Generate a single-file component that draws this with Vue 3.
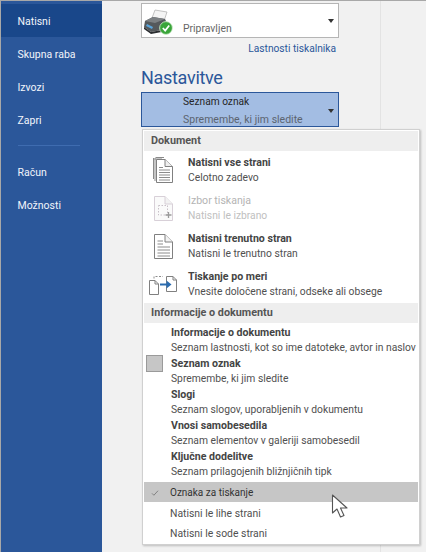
<script setup>
const nav = ['Skupna raba', 'Izvozi', 'Zapri']
const docs = [
  { id: 'all', title: 'Natisni vse strani', sub: 'Celotno zadevo' },
  { id: 'sel', title: 'Izbor tiskanja', sub: 'Natisni le izbrano', off: true },
  { id: 'cur', title: 'Natisni trenutno stran', sub: 'Natisni le trenutno stran' },
  { id: 'cus', title: 'Tiskanje po meri', sub: 'Vnesite določene strani, odseke ali obsege' }
]
const infos = [
  { title: 'Informacije o dokumentu', sub: 'Seznam lastnosti, kot so ime datoteke, avtor in naslov' },
  { title: 'Seznam oznak', sub: 'Spremembe, ki jim sledite', on: true },
  { title: 'Slogi', sub: 'Seznam slogov, uporabljenih v dokumentu' },
  { title: 'Vnosi samobesedila', sub: 'Seznam elementov v galeriji samobesedil' },
  { title: 'Ključne dodelitve', sub: 'Seznam prilagojenih bližnjičnih tipk' }
]
</script>

<template>
  <div class="page">
    <aside class="side">
      <div class="nav active">Natisni</div>
      <div v-for="n in nav" :key="n" class="nav">{{ n }}</div>
      <div class="rule"></div>
      <div class="nav">Račun</div>
      <div class="nav">Možnosti</div>
    </aside>

    <main class="main">
      <div class="col">
        <div class="printer">
          <svg class="pic" width="30" height="26" viewBox="0 0 30 26">
            <path d="M9 9 L12 1 L24 3 L21 12 Z" fill="#f4f4f4" stroke="#aaa" stroke-width=".7"/>
            <path d="M2 12 L10 8 L22 10 L24 14 L24 20 L8 23 L1 18 Z" fill="#55595c"/>
            <path d="M2 12 L10 8 L22 10 L12 14 Z" fill="#7d8184"/>
            <path d="M1 18 L8 23 L24 20 L24 22 L8 25 L1 20 Z" fill="#2a2d30"/>
            <path d="M4 15 L10 18 L9 20 L3 17 Z" fill="#5aa5dc"/>
            <circle cx="23" cy="19" r="6.400" fill="#3aa53a" stroke="#d8efd4" stroke-width=".8"/>
            <path d="M19.800 19 L22.200 21.600 L26.200 16.400" fill="none" stroke="#fff" stroke-width="1.700"/>
          </svg>
          <span class="ready">Pripravljen</span>
          <span class="caret dark"></span>
        </div>
        <div class="link">Lastnosti tiskalnika</div>
        <h2 class="head">Nastavitve</h2>
        <div class="picker">
          <div class="picker-title">Seznam oznak</div>
          <div class="picker-sub">Spremembe, ki jim sledite</div>
          <span class="caret dark"></span>
        </div>
      </div>
    </main>

    <section class="menu">
      <div class="group first">Dokument</div>
      <div v-for="d in docs" :key="d.id" class="doc" :class="{ off: d.off }">
        <svg class="doc-ic" width="32" height="30" viewBox="0 0 32 30">
          <template v-if="d.id === 'all'">
            <path d="M8.500 2.500H17M7.500 4H15" stroke="#8a8a8a" fill="none"/>
            <path d="M6.500 3V24M8 3V26" stroke="#8a8a8a" fill="none"/>
            <path d="M9.500 4.500H18L25.500 11.500V27.500H9.500Z" fill="#fff" stroke="#808080"/>
            <path d="M18 4.500V11.500H25.500" fill="#eee" stroke="#808080"/>
            <path d="M12 12.500H16M12 15H23M12 17.500H23M12 20H23M12 22.500H23M12 25H23" stroke="#8c8c8c"/>
          </template>
          <template v-else-if="d.id === 'sel'">
            <path d="M7.500 3.500H18L25.500 11V27.500H7.500Z" fill="#fafafa" stroke="#d8d0d8"/>
            <path d="M18 3.500V11H25.500" fill="#f2f2f2" stroke="#d8d0d8"/>
            <path d="M11.500 12.500H20.500V22H11.500Z" fill="none" stroke="#c8c0c8" stroke-dasharray="1.500 1.500"/>
            <path d="M21.500 19V25M18.500 22H24.500" stroke="#9a9a9a" stroke-width="1.300"/>
          </template>
          <template v-else-if="d.id === 'cur'">
            <path d="M7.500 3.500H18L25.500 11V27.500H7.500Z" fill="#fff" stroke="#808080"/>
            <path d="M18 3.500V11H25.500" fill="#f2f2f2" stroke="#808080"/>
            <path d="M10.500 10H16M10.500 13H16M10.500 16H23M10.500 19H23M10.500 22H23M10.500 25H23" stroke="#8c8c8c"/>
          </template>
          <template v-else>
            <path d="M2.500 11.500H8L11.500 15V25.500H2.500Z" fill="#fff" stroke="#808080"/>
            <path d="M8 11.500V15H11.500" fill="none" stroke="#808080"/>
            <path d="M19.500 7.500H26L29.500 11V22.500H19.500Z" fill="#fff" stroke="#808080"/>
            <path d="M26 7.500V11H29.500" fill="none" stroke="#808080"/>
            <path d="M7 9.500V7.500H16" fill="none" stroke="#8c8c8c" stroke-dasharray="2 1.500"/>
            <path d="M13 15.500H20" stroke="#2b6cb0" stroke-width="2"/>
            <path d="M19.500 11.500L24.500 15.500L19.500 19.500Z" fill="#2b6cb0"/>
          </template>
        </svg>
        <div class="doc-text">
          <div class="t">{{ d.title }}</div>
          <div class="s">{{ d.sub }}</div>
        </div>
      </div>

      <div class="group">Informacije o dokumentu</div>
      <div class="infos">
        <div v-for="i in infos" :key="i.title" class="info">
          <span class="box-slot"><span v-if="i.on" class="box"></span></span>
          <div>
            <div class="t">{{ i.title }}</div>
            <div class="s">{{ i.sub }}</div>
          </div>
        </div>
      </div>

      <div class="opt selected">
        <svg class="check" width="8" height="6" viewBox="0 0 10 8">
          <path d="M1 4.500L3.500 7L9 1" fill="none" stroke="#7a7a7a" stroke-width="1.200"/>
        </svg>
        Oznaka za tiskanje
      </div>
      <div class="opt">Natisni le lihe strani</div>
      <div class="opt">Natisni le sode strani</div>

      <svg class="cursor" width="20" height="25" viewBox="0 0 20 25">
        <path d="M1.500 1V19L6 15L9.500 23L13 21.500L9.500 14H16Z" fill="#fff" stroke="#555" stroke-width="1.100" stroke-linejoin="round"/>
      </svg>
    </section>
  </div>
</template>

<style scoped>
.page {
  position: relative;
  width: 426px;
  height: 552px;
  box-sizing: border-box;
  display: flex;
  overflow: hidden;
  background: #f1f1f1;
  border-top: 1px solid #a8a8a8;
  border-left: 1px solid #a8a8a8;
  font-family: Roboto, "Open Sans", sans-serif;
  font-size: 10.500px;
  color: #444;
  white-space: nowrap;
}
.side {
  width: 101px;
  flex: none;
  background: #2b579a;
  padding-top: 3px;
  display: flex;
  flex-direction: column;
  color: #fff;
}
.nav {
  height: 33px;
  line-height: 35px;
  padding-left: 16.500px;
  font-size: 10.500px;
  color: #f2f5fa;
}
.active { background: #19478a; }
.rule {
  height: 1px;
  background: #3f6cb0;
  margin: 9px 0 9px 17px;
  width: 62px;
}
.main {
  flex: 1;
  display: flex;
}
.col {
  width: 279px;
  box-sizing: border-box;
  padding: 2px 0 0 39px;
  border-right: 1px solid #e3e3e3;
}
.printer {
  position: relative;
  width: 198px;
  height: 35px;
  box-sizing: border-box;
  background: #fff;
  border: 1px solid #b5b5b5;
}
.pic { position: absolute; left: 1px; top: 5px; }
.ready {
  position: absolute;
  left: 41px;
  top: 17px;
  line-height: 16px;
  font-size: 10.400px;
  color: #666;
}
.caret {
  position: absolute;
  right: 4px;
  top: 15px;
  width: 0;
  height: 0;
  border-left: 3.500px solid transparent;
  border-right: 3.500px solid transparent;
  border-top: 4px solid #333;
}
.link {
  width: 195px;
  text-align: right;
  margin-top: 3px;
  line-height: 16px;
  font-size: 10.200px;
  color: #2b579a;
}
.head {
  margin: 7px 0 0;
  font-weight: 400;
  font-size: 18px;
  letter-spacing: -.3px;
  line-height: 27px;
  color: #2b579a;
}
.picker {
  position: relative;
  width: 198px;
  height: 35px;
  margin-top: 1px;
  box-sizing: border-box;
  background: #a3bde3;
  border: 1px solid #2b579a;
  padding-left: 41px;
}
.picker .caret { top: 16px; }
.picker-title { line-height: 17px; font-size: 10.200px; color: #262626; }
.picker-sub { line-height: 19px; color: #5c6470; }
.menu {
  position: absolute;
  left: 141px;
  top: 128px;
  width: 278px;
  height: 416px;
  box-sizing: border-box;
  padding: 1px 1px;
  background: #fff;
  border: 1px solid #d0d0d0;
  box-shadow: 1px 1px 2px rgba(0, 0, 0, .22);
}
.group {
  height: 20px;
  line-height: 20.500px;
  padding-left: 7px;
  background: #eeeeee;
  font-weight: 700;
  font-size: 10.800px;
  color: #555;
}
.doc {
  height: 38px;
  display: flex;
  align-items: center;
}
.doc-ic { flex: none; margin-left: 3px; }
.doc-text { margin-left: 9px; }
.t { line-height: 15px; font-size: 10.600px; font-weight: 700; color: #444; }
.s { line-height: 15px; font-size: 10.300px; color: #505050; }
.off .t { font-weight: 400; color: #b4b4b4; }
.off .s { color: #c0c0c0; }
.infos { padding: 1px 0 3px; }
.info {
  height: 31px;
  display: flex;
  align-items: center;
}
.box-slot {
  width: 27px;
  flex: none;
  display: flex;
  justify-content: center;
}
.box {
  width: 17px;
  height: 17px;
  box-sizing: border-box;
  background: #c6c6c6;
  border: 1px solid #9a9a9a;
  margin: -1px 0 0 -7px;
  transform: translateY(-7px);
}
.opt {
  position: relative;
  height: 20.500px;
  line-height: 22px;
  padding-left: 26px;
  font-size: 10.400px;
  color: #505050;
}
.selected {
  background: #c6c6c6;
  height: 20px;
  line-height: 21px;
  font-size: 10px;
  color: #333;
  margin-bottom: .500px;
}
.check { position: absolute; left: 7px; top: 8px; }
.cursor { position: absolute; left: 188px; top: 364px; }
</style>
